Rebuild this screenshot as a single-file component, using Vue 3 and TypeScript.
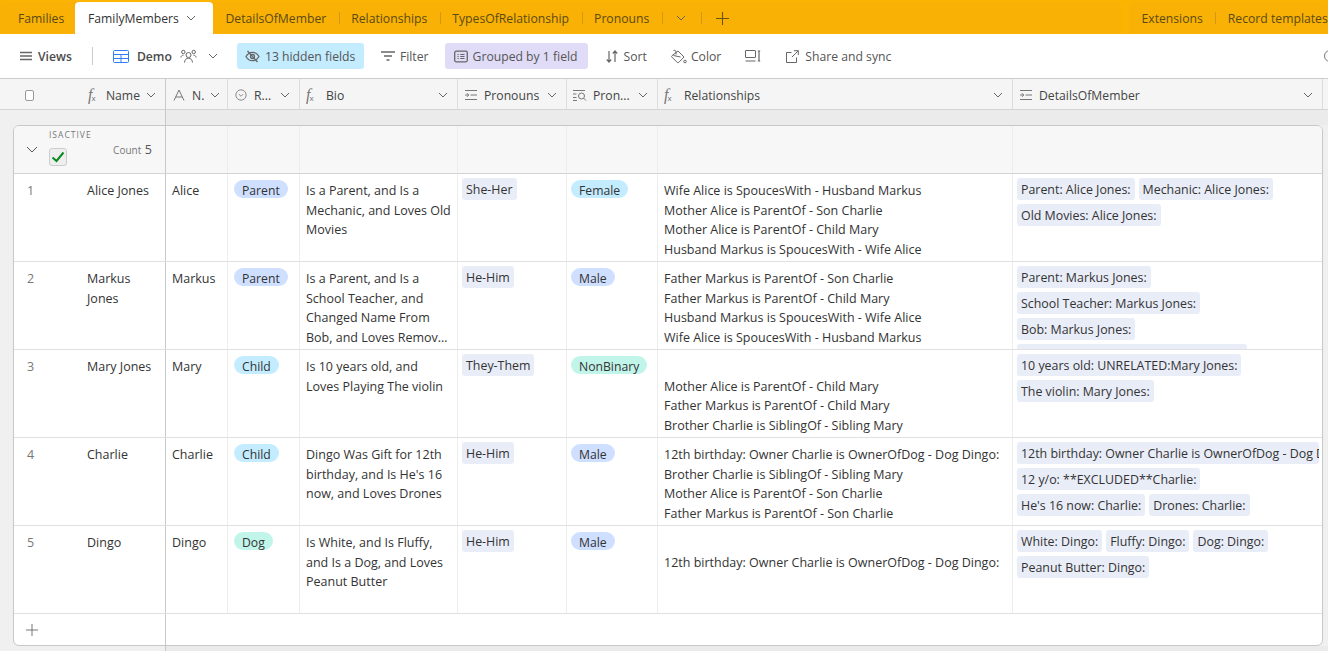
<script setup lang="ts">
type Row = {
  n: number
  name: string
  nick: string
  role: string
  roleKind: string
  bio: string
  bioTail?: string
  pron: string
  gender: string
  genderKind: string
  rels: string[]
  details: string[]
}

const otherTabs = ['DetailsOfMember', 'Relationships', 'TypesOfRelationship', 'Pronouns']

const rows: Row[] = [
  {
    n: 1, name: 'Alice Jones', nick: 'Alice', role: 'Parent', roleKind: 'blue',
    bio: 'Is a Parent, and Is a Mechanic, and Loves Old Movies',
    pron: 'She-Her', gender: 'Female', genderKind: 'cyan',
    rels: ['Wife Alice is SpoucesWith - Husband Markus', 'Mother Alice is ParentOf - Son Charlie', 'Mother Alice is ParentOf - Child Mary', 'Husband Markus is SpoucesWith - Wife Alice'],
    details: ['Parent: Alice Jones:', 'Mechanic: Alice Jones:', 'Old Movies: Alice Jones:']
  },
  {
    n: 2, name: 'Markus Jones', nick: 'Markus', role: 'Parent', roleKind: 'blue',
    bio: 'Is a Parent, and Is a School Teacher, and Changed Name From',
    bioTail: 'Bob, and Loves Removing Things',
    pron: 'He-Him', gender: 'Male', genderKind: 'blue',
    rels: ['Father Markus is ParentOf - Son Charlie', 'Father Markus is ParentOf - Child Mary', 'Husband Markus is SpoucesWith - Wife Alice', 'Wife Alice is SpoucesWith - Husband Markus'],
    details: ['Parent: Markus Jones:', 'School Teacher: Markus Jones:', 'Bob: Markus Jones:', 'Removing Other Things: Markus Jones:']
  },
  {
    n: 3, name: 'Mary Jones', nick: 'Mary', role: 'Child', roleKind: 'cyan',
    bio: 'Is 10 years old, and Loves Playing The violin',
    pron: 'They-Them', gender: 'NonBinary', genderKind: 'teal',
    rels: ['', 'Mother Alice is ParentOf - Child Mary', 'Father Markus is ParentOf - Child Mary', 'Brother Charlie is SiblingOf - Sibling Mary'],
    details: ['10 years old: UNRELATED:Mary Jones:', 'The violin: Mary Jones:']
  },
  {
    n: 4, name: 'Charlie', nick: 'Charlie', role: 'Child', roleKind: 'cyan',
    bio: "Dingo Was Gift for 12th birthday, and Is He's 16 now, and Loves Drones",
    pron: 'He-Him', gender: 'Male', genderKind: 'blue',
    rels: ['12th birthday: Owner Charlie is OwnerOfDog - Dog Dingo:', 'Brother Charlie is SiblingOf - Sibling Mary', 'Mother Alice is ParentOf - Son Charlie', 'Father Markus is ParentOf - Son Charlie'],
    details: ['12th birthday: Owner Charlie is OwnerOfDog - Dog Dingo:', '12 y/o: **EXCLUDED**Charlie:', "He's 16 now: Charlie:", 'Drones: Charlie:']
  },
  {
    n: 5, name: 'Dingo', nick: 'Dingo', role: 'Dog', roleKind: 'teal',
    bio: 'Is White, and Is Fluffy, and Is a Dog, and Loves Peanut Butter',
    pron: 'He-Him', gender: 'Male', genderKind: 'blue',
    rels: ['', '12th birthday: Owner Charlie is OwnerOfDog - Dog Dingo:'],
    details: ['White: Dingo:', 'Fluffy: Dingo:', 'Dog: Dingo:', 'Peanut Butter: Dingo:']
  }
]
</script>

<template>
  <div class="app">
    <div class="tabbar">
      <div class="tabs-main">
        <span class="tab first">Families</span>
        <span class="tab active">FamilyMembers
          <svg class="chev" viewBox="0 0 10 6"><path d="M1 1l4 4 4-4" /></svg>
        </span>
        <span v-for="t in otherTabs" :key="t" class="tab sep">{{ t }}</span>
        <span class="tab-icon sep">
          <svg class="chev" viewBox="0 0 10 6"><path d="M1 1l4 4 4-4" /></svg>
        </span>
        <span class="tab-plus sep">
          <svg viewBox="0 0 12 12"><path d="M6 0v12M0 6h12" /></svg>
        </span>
      </div>
      <div class="tabs-side">
        <span class="tab">Extensions</span>
        <span class="tab sep">Record templates</span>
      </div>
    </div>

    <div class="toolbar">
      <span class="tool views">
        <svg class="ico" viewBox="0 0 12 12"><path d="M0 2.500h12M0 6h12M0 9.500h12" stroke-width="1.500" /></svg>
        <b>Views</b>
      </span>
      <i class="tool-sep"></i>
      <span class="tool demo">
        <svg class="ico grid-ico" viewBox="0 0 16 13"><rect x=".5" y=".5" width="15" height="12" rx="1" /><path d="M.5 4.500h15M.5 8.500h15M8 4.500v8" /></svg>
        <b>Demo</b>
        <svg class="ico people" viewBox="0 0 17 14"><circle cx="8.500" cy="6" r="2.500" /><circle cx="3.300" cy="3" r="1.700" /><circle cx="13.700" cy="3" r="1.700" /><path d="M4.500 13.500c.3-2.800 1.700-4.300 4-4.300s3.700 1.500 4 4.300M.8 8.500C1.200 7 2 6.300 3.500 6.200M16.200 8.500c-.4-1.500-1.200-2.200-2.700-2.300" /></svg>
        <svg class="chev demo-chev" viewBox="0 0 10 6"><path d="M1 1l4 4 4-4" /></svg>
      </span>
      <span class="tool chip hidden-chip">
        <svg class="ico" viewBox="0 0 15 13"><path d="M1 6.500c1.600-2.800 3.700-4.200 6.500-4.200s4.900 1.400 6.500 4.200c-1.600 2.800-3.700 4.200-6.500 4.200S2.600 9.300 1 6.500z" stroke-width="1.300" /><circle cx="7.500" cy="6.500" r="2" stroke-width="1.300" /><path d="M2.500 1l10 11" stroke-width="1.300" /></svg>
        13 hidden fields
      </span>
      <span class="tool filter">
        <svg class="ico" viewBox="0 0 14 10"><path d="M0 1h14M3 5h8M5.500 9h3" stroke-width="1.400" /></svg>
        Filter
      </span>
      <span class="tool chip group-chip">
        <svg class="ico" viewBox="0 0 14 12"><rect x=".7" y=".7" width="12.600" height="10.600" rx="1.500" stroke-width="1.300" /><path d="M3.500 4h1.200M6.300 4h4.200M3.500 6h1.200M6.300 6h4.200M3.500 8h1.200M6.300 8h4.200" /></svg>
        Grouped by 1 field
      </span>
      <span class="tool sort">
        <svg class="ico" viewBox="0 0 12 13"><path d="M3 1v11M.8 9.500L3 12l2.200-2.500M9 12V1M6.800 3.500L9 1l2.200 2.500" stroke-width="1.200" /></svg>
        Sort
      </span>
      <span class="tool color">
        <svg class="ico" viewBox="0 0 16 15"><path d="M7 2l6 6-5.200 5.400a1.100 1.100 0 0 1-1.600 0L1 8.200a1 1 0 0 1 0-1.500z" /><path d="M2.500 1.500c1.200-.6 2.500 0 2.500 1.500v2.500M2.500 6.500L9.500 8" /><circle cx="14" cy="12.500" r="1.300" /></svg>
        Color
      </span>
      <span class="tool height">
        <svg class="ico" viewBox="0 0 16 12"><rect x=".5" y=".5" width="10" height="7" rx=".5" /><path d="M.5 11h10" /><path d="M14 1v10M12.800 1h2.400M12.800 11h2.400" stroke-width="1.200" /></svg>
      </span>
      <span class="tool share">
        <svg class="ico" viewBox="0 0 13 13"><path d="M5.500 2.500H.5v10h10V7.500M8 .7h4.300V5M12.300.7L6 7" /></svg>
        Share and sync
      </span>
      <span class="search-edge"></span>
    </div>

    <div class="head">
      <div class="hc pane">
        <span class="check"></span>
        <span class="fx">f<sub>x</sub></span>
        <span class="hname first-name">Name</span>
        <svg class="chev" viewBox="0 0 10 6"><path d="M1 1l4 4 4-4" /></svg>
      </div>
      <div class="hc">
        <svg class="hico" viewBox="0 0 12 12"><path d="M1 11.500L6 1l5 10.500M2.800 8h6.400" /></svg>
        <span class="hname">N.</span>
        <svg class="chev" viewBox="0 0 10 6"><path d="M1 1l4 4 4-4" /></svg>
      </div>
      <div class="hc">
        <svg class="hico" viewBox="0 0 14 14"><circle cx="7" cy="7" r="6" /><path d="M4.500 6l2.500 2.500L9.500 6" /></svg>
        <span class="hname">R...</span>
        <svg class="chev" viewBox="0 0 10 6"><path d="M1 1l4 4 4-4" /></svg>
      </div>
      <div class="hc">
        <span class="fx">f<sub>x</sub></span>
        <span class="hname">Bio</span>
        <svg class="chev" viewBox="0 0 10 6"><path d="M1 1l4 4 4-4" /></svg>
      </div>
      <div class="hc">
        <svg class="hico" viewBox="0 0 14 12"><path d="M1 1.500h12M6.500 6H13M1 10.500h12M1 6h3.500M3 4.200L4.800 6 3 7.800" /></svg>
        <span class="hname">Pronouns</span>
        <svg class="chev" viewBox="0 0 10 6"><path d="M1 1l4 4 4-4" /></svg>
      </div>
      <div class="hc">
        <svg class="hico" viewBox="0 0 14 12"><path d="M0 1.500h12M0 5h3.500M0 8.500h3.500M0 11.500h4" /><circle cx="8.500" cy="7" r="3" /><path d="M10.700 9.200L13 11.500" /></svg>
        <span class="hname">Pron...</span>
        <svg class="chev" viewBox="0 0 10 6"><path d="M1 1l4 4 4-4" /></svg>
      </div>
      <div class="hc">
        <span class="fx">f<sub>x</sub></span>
        <span class="hname">Relationships</span>
        <svg class="chev" viewBox="0 0 10 6"><path d="M1 1l4 4 4-4" /></svg>
      </div>
      <div class="hc last">
        <svg class="hico" viewBox="0 0 14 12"><path d="M1 1.500h12M6.500 6H13M1 10.500h12M1 6h3.500M3 4.200L4.800 6 3 7.800" /></svg>
        <span class="hname">DetailsOfMember</span>
        <svg class="chev" viewBox="0 0 10 6"><path d="M1 1l4 4 4-4" /></svg>
      </div>
    </div>

    <div class="gap-row"><div class="gap-left"></div></div>

    <div class="card">
      <div class="group-row">
        <div class="cell pane group-pane">
          <svg class="group-chev" viewBox="0 0 12 7"><path d="M1 1l5 5 5-5" /></svg>
          <div class="group-field">
            <div class="group-label">ISACTIVE</div>
            <span class="group-check">
              <svg viewBox="0 0 14 12"><path d="M1.500 6.500l4 3.500 7-8.500" /></svg>
            </span>
          </div>
          <div class="group-count">Count <span>5</span></div>
        </div>
        <div v-for="i in 7" :key="i" class="cell"></div>
      </div>

      <div v-for="r in rows" :key="r.n" class="row">
        <div class="cell pane name-pane">
          <span class="num">{{ r.n }}</span>
          <span class="pname">{{ r.name }}</span>
        </div>
        <div class="cell text">{{ r.nick }}</div>
        <div class="cell pill-cell"><span class="pill" :class="r.roleKind">{{ r.role }}</span></div>
        <div class="cell text">
          <div>{{ r.bio }}</div>
          <div v-if="r.bioTail" class="bio-tail">{{ r.bioTail }}</div>
        </div>
        <div class="cell tag-cell"><span class="tag">{{ r.pron }}</span></div>
        <div class="cell pill-cell gender"><span class="pill" :class="r.genderKind">{{ r.gender }}</span></div>
        <div class="cell text rels">
          <div v-for="(l, i) in r.rels" :key="i" class="rel">{{ l }}</div>
        </div>
        <div class="cell tag-cell tags">
          <span v-for="d in r.details" :key="d" class="tag">{{ d }}</span>
        </div>
      </div>

      <div class="add-row">
        <div class="cell pane add-pane">
          <svg viewBox="0 0 12 12"><path d="M6 0v12M0 6h12" /></svg>
        </div>
      </div>
    </div>

    <div class="gap-row bottom"><div class="gap-left"></div></div>
  </div>
</template>

<style scoped>
.app {
  width: 1328px;
  height: 651px;
  overflow: hidden;
  background: #f0f0f0;
  color: #333;
  font-family: "Open Sans", "Liberation Sans", sans-serif;
  font-size: 12.5px;
}

svg {
  fill: none;
  stroke: currentColor;
  stroke-width: 1;
  flex: none;
}

.tabbar {
  height: 34px;
  background: #fbb402;
  display: flex;
  justify-content: space-between;
  color: #5c4a14;
  font-size: 12.2px;
}

.tabs-main,
.tabs-side {
  display: flex;
  align-items: flex-end;
  height: 32px;
  margin-top: 2px;
  background: #f8b104;
  border-radius: 6px 6px 0 0;
}

.tabs-main {
  width: 1121px;
}

.tabs-side {
  width: 199px;
  overflow: hidden;
}

.tab {
  height: 32px;
  display: flex;
  align-items: center;
  padding: 0 12.500px;
  white-space: nowrap;
  position: relative;
  flex: none;
}

.tab.first {
  padding: 0 0 0 18px;
  width: 75px;
  box-sizing: border-box;
}

.tab.active {
  background: #fff;
  color: #333;
  width: 138px;
  box-sizing: border-box;
  border-radius: 4px 4px 0 0;
  padding: 0 0 0 13px;
  gap: 7px;
}

.tab.active .chev {
  color: #666;
}

.sep::before {
  content: "";
  position: absolute;
  left: 0;
  top: 10px;
  height: 12px;
  width: 1px;
  background: #d09a10;
}

.tabs-main > .tab.active + .sep::before {
  display: none;
}

.tab-icon {
  position: relative;
  height: 32px;
  width: 39px;
  display: flex;
  align-items: center;
  justify-content: center;
}

.tab-plus {
  position: relative;
  height: 32px;
  display: flex;
  align-items: center;
  padding-left: 15px;
  color: #6b5412;
}

.tab-plus svg {
  width: 13px;
  height: 13px;
}

.chev {
  width: 10px;
  height: 6px;
  color: #666;
}

.toolbar {
  height: 45px;
  background: #fff;
  display: flex;
  align-items: center;
  color: #555;
  position: relative;
  box-sizing: border-box;
  border-bottom: 1px solid #ccc;
  font-size: 12.200px;
}

.tool {
  display: inline-flex;
  align-items: center;
  gap: 5px;
  height: 26px;
  white-space: nowrap;
}

.tool b {
  font-weight: 600;
  color: #4a4a4a;
}

.ico {
  width: 14px;
  height: 13px;
  color: #666;
}

.views {
  margin-left: 20px;
  gap: 6px;
}

.views .ico {
  width: 12px;
  height: 12px;
}

.tool-sep {
  width: 1px;
  height: 18px;
  background: #ccc;
  margin-left: 20px;
}

.demo {
  margin-left: 20px;
  gap: 8px;
}

.grid-ico {
  width: 16px;
  height: 13px;
  color: #2d7ff9;
}

.people {
  width: 17px;
  height: 14px;
}

.demo-chev {
  margin-left: 3px;
}

.chip {
  border-radius: 3px;
  padding-left: 8px;
  box-sizing: border-box;
}

.hidden-chip {
  margin-left: 19px;
  background: #c4ecff;
  width: 127px;
  gap: 5px;
}

.hidden-chip .ico {
  width: 15px;
}

.filter {
  margin-left: 17px;
}

.filter .ico {
  height: 10px;
}

.group-chip {
  margin-left: 16px;
  background: #e0dcf7;
  width: 143px;
  padding-left: 9px;
}

.sort {
  margin-left: 18px;
  gap: 6px;
}

.sort .ico {
  width: 12px;
}

.color {
  margin-left: 24px;
  gap: 4px;
}

.color .ico {
  width: 16px;
  height: 15px;
}

.height {
  margin-left: 24px;
}

.height .ico {
  width: 16px;
  height: 12px;
}

.share {
  margin-left: 25px;
  gap: 6px;
}

.share .ico {
  width: 13px;
}

.search-edge {
  position: absolute;
  right: -8px;
  top: 16px;
  width: 10px;
  height: 10px;
  border: 1px solid #777;
  border-radius: 50%;
}

.head,
.group-row,
.row,
.add-row {
  display: grid;
  grid-template-columns: 152px 62px 72px 158px 109px 91px 355px 309px;
}

.head {
  height: 31px;
  padding-left: 14px;
  grid-template-columns: 152px 62px 72px 158px 109px 91px 355px 310px;
  background: #f5f5f5;
  border-bottom: 1px solid #d4d4d4;
  box-sizing: border-box;
  overflow: hidden;
  font-size: 12.200px;
}

.hc {
  display: flex;
  align-items: center;
  gap: 6px;
  padding: 2px 9px 0 6px;
  border-right: 1px solid #ddd;
  box-sizing: border-box;
  min-width: 0;
  color: #444;
}

.hc.pane {
  margin-left: -14px;
  width: 166px;
  padding-left: 25px;
  border-right-color: #c8c8c8;
}

.hc .chev {
  margin-left: auto;
}

.hname {
  white-space: nowrap;
}

.first-name {
  margin-left: -2px;
}

.check {
  width: 9px;
  height: 9px;
  border: 1px solid #999;
  border-radius: 2px;
  background: #fff;
  margin-right: 48px;
}

.fx {
  font-family: "Liberation Serif", serif;
  font-style: italic;
  font-size: 16px;
  color: #777;
  width: 14px;
  line-height: 1;
  flex: none;
  white-space: nowrap;
}

.fx sub {
  font-size: 8px;
  font-family: "Open Sans", sans-serif;
  font-style: normal;
  vertical-align: -1px;
  margin-left: -1px;
}

.hico {
  width: 14px;
  height: 12px;
  color: #777;
}

.gap-row {
  height: 15px;
  background: #ebebeb;
}

.gap-row.bottom {
  height: 6px;
}

.gap-left {
  width: 165px;
  height: 100%;
  background: #f0f0f0;
  border-right: 1px solid #c8c8c8;
}

.card {
  margin: 0 5px 0 13px;
  width: 1310px;
  background: #fff;
  border: 1px solid #c8c8c8;
  border-radius: 6px;
  box-sizing: border-box;
  overflow: hidden;
}

.group-row {
  height: 48px;
  background: #f7f7f7;
  border-bottom: 1px solid #d4d4d4;
  box-sizing: border-box;
}

.row {
  height: 88px;
  border-bottom: 1px solid #e0e0e0;
  box-sizing: border-box;
}

.cell {
  border-right: 1px solid #ededed;
  box-sizing: border-box;
  min-width: 0;
  overflow: hidden;
}

.cell:last-child {
  border-right: 0;
}

.cell.pane {
  border-right: 1px solid #c8c8c8;
}

.group-pane {
  display: flex;
  position: relative;
}

.group-chev {
  width: 12px;
  height: 7px;
  margin: 20px 0 0 12px;
  color: #555;
}

.group-field {
  margin-left: 11px;
  padding-top: 3px;
}

.group-label {
  font-size: 8.500px;
  letter-spacing: 1px;
  color: #777;
  line-height: 12px;
  white-space: nowrap;
}

.group-check {
  display: block;
  width: 18px;
  height: 18px;
  margin-top: 7px;
  border: 1px solid #ccc;
  border-radius: 3px;
  background: #eee;
  box-sizing: border-box;
  color: #0a8a1e;
}

.group-check svg {
  display: block;
  width: 14px;
  height: 12px;
  margin: 2px 0 0 1px;
  stroke-width: 2;
}

.group-count {
  margin-left: auto;
  padding: 15px 13px 0 0;
  font-size: 10px;
  color: #777;
  white-space: nowrap;
}

.group-count span {
  font-size: 12.500px;
  color: #555;
  margin-left: 1px;
}

.name-pane {
  display: flex;
  padding: 7px 8px 0 13px;
  line-height: 19.500px;
}

.num {
  width: 60px;
  flex: none;
  color: #777;
}

.pname {
  min-width: 0;
}

.text {
  padding: 7px 6px 0;
  line-height: 19.500px;
}

.bio-tail {
  white-space: nowrap;
  overflow: hidden;
  text-overflow: ellipsis;
  padding-right: 1px;
}

.rel {
  min-height: 19.500px;
  white-space: nowrap;
}

.pill-cell {
  padding: 6px 6px 0;
}

.pill-cell.gender {
  padding-left: 4px;
}

.pill {
  display: inline-block;
  height: 18px;
  line-height: 21px;
  border-radius: 9px;
  padding: 0 8px;
  white-space: nowrap;
  font-size: 12.200px;
}

.pill.blue {
  background: #cfdfff;
}

.pill.cyan {
  background: #c4ecff;
}

.pill.teal {
  background: #c2f5e9;
}

.tag-cell {
  padding: 4px 3px 0 4px;
  font-size: 12.400px;
}

.tags {
  display: flex;
  flex-wrap: wrap;
  gap: 4px;
  align-content: flex-start;
}

.tag {
  display: inline-block;
  height: 22px;
  line-height: 23px;
  background: #e9edf8;
  border-radius: 3px;
  padding: 0 4px;
  white-space: nowrap;
  max-width: 100%;
  overflow: hidden;
  box-sizing: border-box;
}

.add-row {
  height: 31px;
}

.add-pane {
  display: flex;
  align-items: center;
  padding-left: 12px;
  color: #777;
}

.add-pane svg {
  width: 12px;
  height: 12px;
}
</style>
